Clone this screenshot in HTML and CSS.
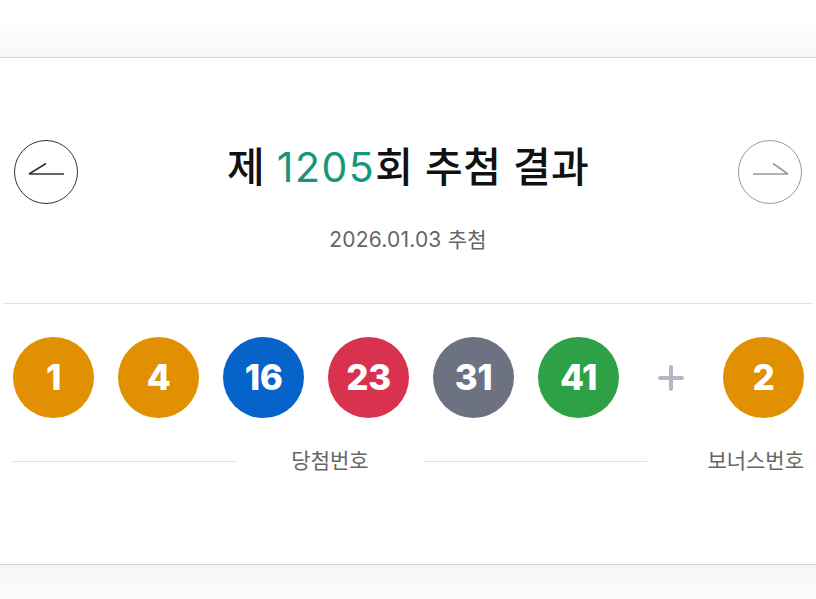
FILE: index.html
```html
<!DOCTYPE html>
<html lang="ko">
<head>
<meta charset="utf-8">
<link rel="stylesheet" href="styles.css">
</head>
<body>
<div class="topband"></div>
<main class="result">
  <div class="head">
    <button class="nav prev" aria-label="이전">
      <svg width="64" height="64" viewBox="0 0 64 64"><circle cx="32" cy="32" r="31.5" fill="none" stroke="#333" stroke-width="1"/><path d="M15 34H50M15 34L32 23.5" fill="none" stroke="#333" stroke-width="1.6"/></svg>
    </button>
    <h1 class="title">제 <span class="round">1205</span>회 추첨 결과</h1>
    <button class="nav next" aria-label="다음">
      <svg width="64" height="64" viewBox="0 0 64 64"><circle cx="32" cy="32" r="31.5" fill="none" stroke="#999" stroke-width="1"/><path d="M15 34H50M50 34L35 23.5" fill="none" stroke="#999" stroke-width="1.6"/></svg>
    </button>
  </div>
  <p class="date">2026.01.03 추첨</p>
  <hr class="divider">
  <div class="balls">
    <span class="ball c-yellow">1</span>
    <span class="ball c-yellow">4</span>
    <span class="ball c-blue">16</span>
    <span class="ball c-red">23</span>
    <span class="ball c-gray">31</span>
    <span class="ball c-green">41</span>
    <span class="plus"><svg width="26" height="26" viewBox="0 0 26 26"><path d="M13 2V24M2 13H24" stroke="#b4b7c3" stroke-width="4" stroke-linecap="round"/></svg></span>
    <span class="ball c-yellow">2</span>
  </div>
  <div class="labels">
    <div class="main-label"><span class="line"></span><span class="ltext">당첨번호</span><span class="line"></span></div>
    <div class="bonus-label">보너스번호</div>
  </div>
</main>
<div class="bottomband"></div>
</body>
</html>
```

FILE: styles.css
```css
html, body {
  margin: 0;
  padding: 0;
  background: #fff;
  font-family: "Noto Sans CJK KR", "Noto Sans", sans-serif;
}
.topband {
  height: 57px;
  border-bottom: 1px solid #d6d6d6;
  background: linear-gradient(to bottom, #fff 0%, #fefefe 40%, #f7f7f7 100%);
}
.result {
  height: 506px;
  padding-top: 82px;
  box-sizing: border-box;
}
.head {
  display: flex;
  align-items: center;
  justify-content: space-between;
  padding: 0 14px;
  height: 64px;
}
.nav {
  width: 64px;
  height: 64px;
  padding: 0;
  border: 0;
  background: none;
  display: block;
}
.nav svg { display: block; }
.title {
  margin: -13px 0 0;
  font-size: 41px;
  font-weight: 500;
  color: #111;
  line-height: 52px;
  letter-spacing: 0.3px;
}
.round {
  font-family: "Inter", "Noto Sans", sans-serif;
  font-weight: 400;
  color: #16967a;
  letter-spacing: 1.5px;
}
.date {
  margin: 24px 0 0;
  text-align: center;
  font-family: "Inter", "Noto Sans CJK KR", sans-serif;
  font-size: 21px;
  line-height: 24px;
  color: #666;
  letter-spacing: 0.2px;
}
.divider {
  margin: 51px 3px 0;
  border: 0;
  border-top: 1px solid #e2e2e2;
  height: 0;
}
.balls {
  display: flex;
  align-items: center;
  gap: 24px;
  padding-left: 13px;
  margin-top: 33px;
}
.ball {
  width: 81px;
  height: 81px;
  border-radius: 50%;
  display: flex;
  align-items: center;
  justify-content: center;
  color: #fff;
  font-family: "Inter", sans-serif;
  font-weight: 800;
  font-size: 35px;
  letter-spacing: -0.5px;
  padding-bottom: 2px;
  box-sizing: border-box;
}
.c-yellow { background: #e09000; }
.c-blue { background: #0563c9; }
.c-red { background: #d9324f; }
.c-gray { background: #6d7282; }
.c-green { background: #2ea046; }
.plus {
  width: 56px;
  display: flex;
  justify-content: center;
}
.plus svg { display: block; }
.labels {
  display: flex;
  align-items: center;
  margin-top: 29px;
  padding: 0 12px 0 13px;
}
.main-label {
  width: 634px;
  display: flex;
  align-items: center;
}
.line {
  flex: 1;
  height: 1px;
  background: #e0e0e0;
  margin-top: 4px;
}
.ltext, .bonus-label {
  font-size: 21px;
  line-height: 24px;
  color: #666;
}
.ltext { margin: 0 54px; }
.bonus-label {
  margin-left: auto;
}
.bottomband {
  height: 35px;
  border-top: 1px solid #d6d6d6;
  background: linear-gradient(to bottom, #f6f6f6 0%, #fbfbfb 100%);
}
```
